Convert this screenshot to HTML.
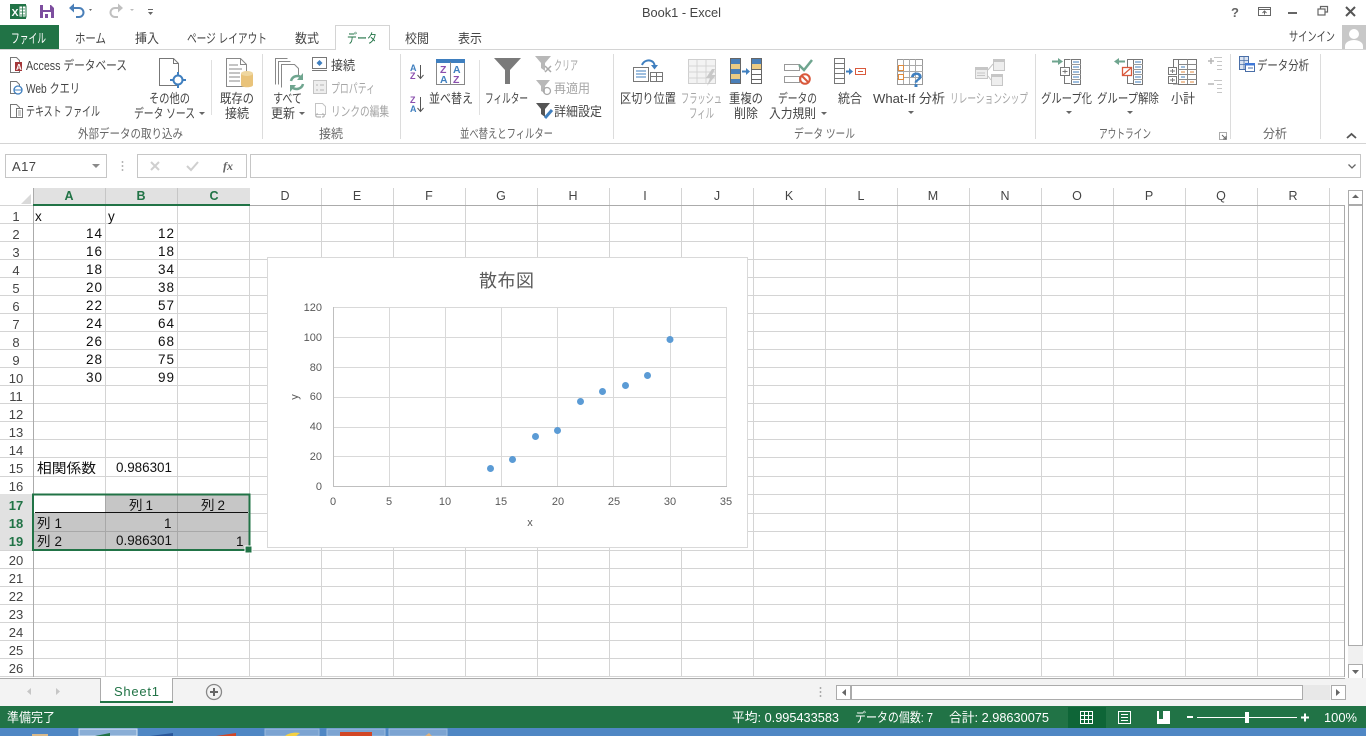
<!DOCTYPE html>
<html lang="ja"><head><meta charset="utf-8"><title>Book1 - Excel</title>
<style>
html,body{margin:0;padding:0;width:1366px;height:736px;overflow:hidden;background:#fff}
svg{display:block}
text{font-family:"Liberation Sans","Noto Sans CJK JP",sans-serif;font-size:13px;fill:#444}
.g{fill:#a6a6a6}
.s{font-size:12.500px;fill:#666}
.c{font-size:13.500px;fill:#111}
.h{font-size:12.500px;fill:#444;text-anchor:middle}
.hs{font-size:12.500px;fill:#217346;font-weight:bold;text-anchor:middle}
.r{font-size:13px;fill:#444;text-anchor:middle}
.rs{font-size:13px;fill:#217346;font-weight:bold;text-anchor:middle}
.a{font-size:11px;fill:#595959}
.w{fill:#fff}
</style></head><body>
<svg width="1366" height="736" viewBox="0 0 1366 736" xmlns="http://www.w3.org/2000/svg" shape-rendering="geometricPrecision">
<rect width="1366" height="736" fill="#fff"/>

<!-- QAT -->
<rect x="10" y="4" width="16" height="15" fill="#217346"/><rect x="19" y="6" width="7" height="11" fill="#fff" stroke="#217346"/><path d="M20 9h5M20 12h5M20 15h5M22.500 6v11" stroke="#217346" stroke-width=".8"/><text x="11.500" y="16" style="font-size:10.500px;font-weight:bold;fill:#fff">X</text>
<path d="M40 5h11l3 3v10H40z" fill="#7d4e9f"/><rect x="43" y="5" width="7" height="5" fill="#fff"/><rect x="43" y="12" width="8" height="6" fill="#fff"/><rect x="45" y="14" width="3" height="4" fill="#7d4e9f"/>
<path d="M70 8h9a4.500 4.500 0 0 1 0 9h-3" fill="none" stroke="#4a7fb8" stroke-width="2"/><path d="M74 3.500l-5 4.500 5 4.500z" fill="#4a7fb8"/><path d="M89 9l3 0-1.500 2z" fill="#666"/>
<path d="M121 8h-6a4.500 4.500 0 0 0 0 9h3" fill="none" stroke="#c0c0c0" stroke-width="2"/><path d="M118 3.500l5 4.500-5 4.500z" fill="#c0c0c0"/><path d="M130 9l4 0-2 2z" fill="#bbb"/>
<path d="M148 9h5v1h-5zM148 12l5 0-2.500 3z" fill="#666"/>
<text x="642" y="17" textLength="79" lengthAdjust="spacingAndGlyphs" style="font-size:13px">Book1 - Excel</text>

<!-- window controls -->
<text x="1231" y="17" style="font-size:13px;font-weight:bold;fill:#666">?</text>
<rect x="1258.500" y="7.500" width="12" height="8" fill="none" stroke="#666"/><path d="M1258 9.500h12" stroke="#666"/><path d="M1264.500 14.500v-3M1262.500 13l2-2 2 2" fill="none" stroke="#666"/>
<rect x="1288" y="12" width="9" height="2" fill="#666"/>
<rect x="1318" y="9" width="7" height="6" fill="#fff" stroke="#666" stroke-width="1.200"/><path d="M1320.500 9V6.500h7V12h-2" fill="none" stroke="#666" stroke-width="1.200"/>
<path d="M1346 7l9 9M1355 7l-9 9" stroke="#555" stroke-width="2"/>

<!-- Tabs -->
<rect x="0" y="25" width="59" height="25" fill="#217346"/>
<path d="M0 49.500H335.500V25.500H389.500V49.500H1366" fill="none" stroke="#d4d4d4"/>
<text x="11" y="43" class="w" textLength="35" lengthAdjust="spacingAndGlyphs">ファイル</text>
<text x="75" y="43" textLength="31" lengthAdjust="spacingAndGlyphs">ホーム</text>
<text x="135" y="43" textLength="24" lengthAdjust="spacingAndGlyphs">挿入</text>
<text x="187" y="43" textLength="80" lengthAdjust="spacingAndGlyphs">ページ レイアウト</text>
<text x="295" y="43" textLength="24" lengthAdjust="spacingAndGlyphs">数式</text>
<text x="347" y="43" textLength="30" lengthAdjust="spacingAndGlyphs" style="fill:#217346">データ</text>
<text x="405" y="43" textLength="24" lengthAdjust="spacingAndGlyphs">校閲</text>
<text x="458" y="43" textLength="24" lengthAdjust="spacingAndGlyphs">表示</text>
<text x="1289" y="41" textLength="46" lengthAdjust="spacingAndGlyphs">サインイン</text>
<rect x="1342" y="25" width="24" height="24" fill="#c8c8c8"/><circle cx="1354" cy="34" r="5" fill="#fff"/><path d="M1345 49v-3c0-4 5-6 9-6s9 2 9 6v3z" fill="#fff"/>

<!-- Ribbon frame -->
<path d="M0 143.500H1366" stroke="#d4d4d4"/>
<path d="M262.500 54v85M400.500 54v85M613.500 54v85M1035.500 54v85M1230.500 54v85M1320.500 54v85" stroke="#dcdcdc"/>
<path d="M211.500 60v55M479.500 60v55" stroke="#e0e0e0"/>

<!-- External data group -->
<path d="M10.500 57.500h6l3 3v12h-9z" fill="#fff" stroke="#777"/><rect x="15" y="62" width="7" height="9" fill="#a4373a"/><text x="16" y="70" style="font-size:8px;font-weight:bold;fill:#fff">A</text>
<text x="26" y="70" textLength="101" lengthAdjust="spacingAndGlyphs">Access データベース</text>
<path d="M10.500 81.500h6l3 3v9h-9z" fill="#fff" stroke="#777"/><circle cx="18" cy="90" r="4" fill="#fff" stroke="#3f7fbf" stroke-width="1.300"/><path d="M14 90h8" stroke="#3f7fbf"/>
<text x="26" y="93" textLength="54" lengthAdjust="spacingAndGlyphs">Web クエリ</text>
<path d="M10.500 104.500h6l3 3v10h-9z" fill="#fff" stroke="#777"/><rect x="16.500" y="108.500" width="6" height="9" fill="#fff" stroke="#777"/><path d="M18 111h3M18 113h3M18 115h3" stroke="#777" stroke-width=".7"/>
<text x="26" y="116" textLength="74" lengthAdjust="spacingAndGlyphs">テキスト ファイル</text>
<path d="M159.500 58.500h14l5 5v22h-19z" fill="#fff" stroke="#777"/><path d="M173.500 58.500v5h5" fill="none" stroke="#777"/>
<path d="M178 72v16M170 80h16" stroke="#3f7fbf" stroke-width="2"/><circle cx="178" cy="80" r="4.500" fill="#fff" stroke="#3f7fbf" stroke-width="2"/>
<text x="149" y="103" textLength="41" lengthAdjust="spacingAndGlyphs">その他の</text>
<text x="134" y="118" textLength="61" lengthAdjust="spacingAndGlyphs">データ ソース</text>
<path d="M199 112h6l-3 3z" fill="#666"/>
<path d="M226.500 58.500h14l6 6v22h-20z" fill="#fff" stroke="#888"/><path d="M240.500 58.500v6h6" fill="none" stroke="#888"/><path d="M229 65h9M229 69h13M229 73h11M229 77h11M229 81h11" stroke="#888"/>
<path d="M241 74v11c0 3 12 3 12 0V74z" fill="#e9c37a"/><ellipse cx="247" cy="73.500" rx="6" ry="2.500" fill="#efd7a0"/>
<text x="220" y="103" textLength="34" lengthAdjust="spacingAndGlyphs">既存の</text>
<text x="225" y="118" textLength="24" lengthAdjust="spacingAndGlyphs">接続</text>
<text x="78" y="138" class="s" textLength="105" lengthAdjust="spacingAndGlyphs">外部データの取り込み</text>

<!-- connections -->
<path d="M275.500 84.500v-26h12" fill="none" stroke="#888"/><path d="M278.500 84.500v-23h12" fill="none" stroke="#888"/><path d="M281.500 87.500v-23h13l4 4v8" fill="#fff" stroke="#888"/>
<path d="M291 81a6.500 6.500 0 0 1 11-3" fill="none" stroke="#6fa58f" stroke-width="2.500"/><path d="M303 73v7h-6z" fill="#6fa58f"/><path d="M303 84a6.500 6.500 0 0 1-11 3" fill="none" stroke="#6fa58f" stroke-width="2.500"/><path d="M290 92v-7h6z" fill="#6fa58f"/>
<text x="273" y="103" textLength="29" lengthAdjust="spacingAndGlyphs">すべて</text>
<text x="271" y="118" textLength="24" lengthAdjust="spacingAndGlyphs">更新</text>
<path d="M299 112h6l-3 3z" fill="#666"/>
<rect x="312.500" y="57.500" width="14" height="11" fill="#fff" stroke="#777"/><path d="M312 70.500h15" stroke="#777"/><path d="M319.500 60l3 3-3 3-3-3z" fill="#3f7fbf"/>
<text x="331" y="70" textLength="24" lengthAdjust="spacingAndGlyphs">接続</text>
<rect x="313.500" y="80.500" width="13" height="13" fill="#eee" stroke="#c4c4c4"/><path d="M316 85h2M320 85h4M316 90h2M320 90h4" stroke="#b5b5b5"/>
<text x="331" y="93" class="g" textLength="44" lengthAdjust="spacingAndGlyphs">プロパティ</text>
<path d="M315.500 103.500h7l3 3v8h-10z" fill="#fff" stroke="#c4c4c4"/><path d="M318 114c-3 0-3 3 0 3h3M322 114c3 0 3 3 0 3" fill="none" stroke="#b5b5b5" stroke-width="1.200"/>
<text x="331" y="116" class="g" textLength="58" lengthAdjust="spacingAndGlyphs">リンクの編集</text>
<text x="319" y="138" class="s" textLength="24" lengthAdjust="spacingAndGlyphs">接続</text>

<!-- Sort -->
<text x="410" y="71" style="font-size:9px;font-weight:bold;fill:#3f7fbf">A</text><text x="410" y="79" style="font-size:9px;font-weight:bold;fill:#8a4fae">Z</text>
<path d="M420.500 65v13M417.500 75l3 3.500 3-3.500" fill="none" stroke="#555"/>
<text x="410" y="103" style="font-size:9px;font-weight:bold;fill:#8a4fae">Z</text><text x="410" y="112" style="font-size:9px;font-weight:bold;fill:#3f7fbf">A</text>
<path d="M420.500 97v14M417.500 108l3 3.500 3-3.500" fill="none" stroke="#555"/>
<rect x="436.500" y="62.500" width="28" height="22" fill="#fff" stroke="#888"/><rect x="436" y="59" width="29" height="4" fill="#3f7fbf"/><path d="M450.500 62v22" stroke="#888"/>
<text x="440" y="73" style="font-size:10.500px;font-weight:bold;fill:#8a4fae">Z</text><text x="440" y="83" style="font-size:10.500px;font-weight:bold;fill:#3f7fbf">A</text>
<text x="453" y="73" style="font-size:10.500px;font-weight:bold;fill:#3f7fbf">A</text><text x="453" y="83" style="font-size:10.500px;font-weight:bold;fill:#8a4fae">Z</text>
<text x="429" y="103" textLength="44" lengthAdjust="spacingAndGlyphs">並べ替え</text>
<path d="M494 58h27l-11 12v14h-5V70z" fill="#7a7a7a"/>
<text x="485" y="103" textLength="43" lengthAdjust="spacingAndGlyphs">フィルター</text>
<path d="M535 56h16l-6 7v8l-4-3v-5z" fill="#b8b8b8"/><path d="M545 66l6 6M551 66l-6 6" stroke="#aaa" stroke-width="1.500"/>
<text x="554" y="70" class="g" textLength="24" lengthAdjust="spacingAndGlyphs">クリア</text>
<path d="M536 80h14l-5 6v7l-4-2v-5z" fill="#b8b8b8"/><circle cx="547" cy="91" r="3.500" fill="none" stroke="#aaa" stroke-width="1.300"/>
<text x="554" y="93" class="g" textLength="36" lengthAdjust="spacingAndGlyphs">再適用</text>
<path d="M536 103h14l-5 6v8l-4-3v-5z" fill="#555"/><path d="M545 118l7-8" stroke="#3f7fbf" stroke-width="3"/>
<text x="554" y="116" textLength="48" lengthAdjust="spacingAndGlyphs">詳細設定</text>
<text x="460" y="138" class="s" textLength="93" lengthAdjust="spacingAndGlyphs">並べ替えとフィルター</text>

<!-- Data tools -->
<rect x="633.500" y="67.500" width="15" height="14" fill="#fff" stroke="#777"/><path d="M636 71h10M636 74h10M636 77h10" stroke="#3f7fbf"/>
<rect x="650.500" y="72.500" width="12" height="9" fill="#fff" stroke="#777"/><path d="M651 76.500h11M656.500 72v9" stroke="#777"/>
<path d="M642 65a7 7 0 0 1 11-3 6 6 0 0 1 1.500 5" fill="none" stroke="#3f7fbf" stroke-width="2"/><path d="M651 65h7l-3.500 4.500z" fill="#3f7fbf"/>
<text x="620" y="103" textLength="56" lengthAdjust="spacingAndGlyphs">区切り位置</text>
<rect x="688.500" y="59.500" width="27" height="24" fill="#f3f3f3" stroke="#cfcfcf"/><path d="M688 66h27M688 72h27M688 78h27M697 60v24M706 60v24" stroke="#d4d4d4"/><path d="M712 69l-6 9h4l-3 8 9-11h-4l3-6z" fill="#c8c8c8"/>
<text x="681" y="103" class="g" textLength="41" lengthAdjust="spacingAndGlyphs">フラッシュ</text>
<text x="689" y="118" class="g" textLength="25" lengthAdjust="spacingAndGlyphs">フィル</text>
<rect x="730.500" y="58.500" width="10" height="25" fill="#4a7fb8" stroke="#666"/><rect x="731" y="64" width="9" height="5" fill="#eccb84"/><rect x="731" y="74" width="9" height="5" fill="#eccb84"/>
<path d="M742 71.500h5" stroke="#3f7fbf" stroke-width="2"/><path d="M746 68l4 3.500-4 3.500z" fill="#3f7fbf"/>
<rect x="751.500" y="58.500" width="10" height="25" fill="#fff" stroke="#666"/><rect x="752" y="59" width="9" height="5" fill="#4a7fb8"/><rect x="752" y="64" width="9" height="5" fill="#eccb84"/><path d="M751 69.500h11M751 74.500h11M751 79.500h11" stroke="#666"/>
<text x="729" y="103" textLength="34" lengthAdjust="spacingAndGlyphs">重複の</text>
<text x="734" y="118" textLength="24" lengthAdjust="spacingAndGlyphs">削除</text>
<rect x="784.500" y="64.500" width="15" height="6" fill="#fff" stroke="#999"/><rect x="784.500" y="76.500" width="15" height="6" fill="#fff" stroke="#999"/>
<path d="M799 65l5 5 8-10" fill="none" stroke="#6fa58f" stroke-width="2.500"/>
<circle cx="805" cy="79" r="4.800" fill="#fff" stroke="#d9593c" stroke-width="2"/><path d="M802 76l6 6" stroke="#d9593c" stroke-width="2"/>
<text x="778" y="103" textLength="39" lengthAdjust="spacingAndGlyphs">データの</text>
<text x="769" y="118" textLength="47" lengthAdjust="spacingAndGlyphs">入力規則</text>
<path d="M821 112h6l-3 3z" fill="#666"/>
<rect x="834.500" y="58.500" width="10" height="25" fill="#fff" stroke="#777"/><path d="M834 63.500h11M834 68.500h11M834 73.500h11M834 78.500h11" stroke="#777"/>
<path d="M846 71.500h4" stroke="#3f7fbf" stroke-width="2"/><path d="M849 68l4 3.500-4 3.500z" fill="#3f7fbf"/>
<rect x="855.500" y="68.500" width="10" height="6" fill="#fff" stroke="#d9593c"/><path d="M858 71.500h5" stroke="#d9593c"/>
<text x="838" y="103" textLength="24" lengthAdjust="spacingAndGlyphs">統合</text>
<rect x="897.500" y="59.500" width="25" height="25" fill="#fff" stroke="#999"/><path d="M897 65.500h26M897 71.500h26M897 77.500h26M903.500 59v25M909.500 59v25M915.500 59v25" stroke="#aaa"/><rect x="898.500" y="65.500" width="5" height="5" fill="#fff" stroke="#e08a3c"/><rect x="898.500" y="74.500" width="5" height="5" fill="#fff" stroke="#e08a3c"/>
<text x="910" y="87" style="font-size:21px;font-weight:bold;fill:#3f7fbf">?</text>
<text x="873" y="103" textLength="72" lengthAdjust="spacingAndGlyphs">What-If 分析</text>
<path d="M908 111h6l-3 3z" fill="#666"/>
<rect x="975.500" y="67.500" width="12" height="11" fill="#eee" stroke="#c6c6c6"/><rect x="975" y="67" width="13" height="3" fill="#c6c6c6"/><path d="M977 73h8M977 75.500h8" stroke="#c6c6c6"/>
<rect x="993.500" y="59.500" width="11" height="11" fill="#eee" stroke="#c6c6c6"/><rect x="993" y="59" width="12" height="3" fill="#c6c6c6"/>
<rect x="991.500" y="74.500" width="11" height="11" fill="#eee" stroke="#c6c6c6"/><rect x="991" y="74" width="12" height="3" fill="#c6c6c6"/>
<path d="M988 70l5-6M988 76l3 4" stroke="#c6c6c6"/>
<text x="950" y="103" class="g" textLength="78" lengthAdjust="spacingAndGlyphs">リレーションシップ</text>
<text x="794" y="138" class="s" textLength="61" lengthAdjust="spacingAndGlyphs">データ ツール</text>

<!-- Outline -->
<path d="M1052 61.500h9" stroke="#6fa58f" stroke-width="2"/><path d="M1058 58l5 3.500-5 3.500z" fill="#6fa58f"/>
<path d="M1070.500 59.500h-6v8M1064.500 76v7.500h6" fill="none" stroke="#777"/><rect x="1060.500" y="67.500" width="9" height="8" fill="#fff" stroke="#777"/><path d="M1062.500 71.500h5M1065 69.500v4" stroke="#777"/>
<rect x="1071.500" y="59.500" width="9" height="25" fill="#fff" stroke="#777"/><path d="M1071 64.500h10M1071 69.500h10M1071 74.500h10M1071 79.500h10" stroke="#999"/><path d="M1073 62h6M1073 67h6M1073 72h6M1073 77h6M1073 82h6" stroke="#3f7fbf"/>
<text x="1041" y="103" textLength="51" lengthAdjust="spacingAndGlyphs">グループ化</text>
<path d="M1066 111h6l-3 3z" fill="#666"/>
<path d="M1125 61.500h-8" stroke="#6fa58f" stroke-width="2"/><path d="M1119 58l-5 3.500 5 3.500z" fill="#6fa58f"/>
<path d="M1133.500 59.500h-6v8M1127.500 76v7.500h6" fill="none" stroke="#777"/><rect x="1122.500" y="67.500" width="9" height="8" fill="#fff" stroke="#d9593c" stroke-width="1.300"/><path d="M1123 75l8-7" stroke="#d9593c" stroke-width="1.300"/>
<rect x="1133.500" y="59.500" width="9" height="25" fill="#fff" stroke="#777"/><path d="M1133 64.500h10M1133 69.500h10M1133 74.500h10M1133 79.500h10" stroke="#999"/><path d="M1135 62h6M1135 67h6M1135 72h6M1135 77h6M1135 82h6" stroke="#3f7fbf"/>
<text x="1097" y="103" textLength="62" lengthAdjust="spacingAndGlyphs">グループ解除</text>
<path d="M1127 111h6l-3 3z" fill="#666"/>
<path d="M1179.500 59.500h-6v8M1173.500 76v8h6" fill="none" stroke="#777"/>
<rect x="1168.500" y="67.500" width="8" height="7" fill="#fff" stroke="#777"/><rect x="1168.500" y="76.500" width="8" height="7" fill="#fff" stroke="#777"/><path d="M1170 71h5M1172.500 69v4M1170 80h5M1172.500 78v4" stroke="#777"/>
<rect x="1178.500" y="59.500" width="18" height="25" fill="#fff" stroke="#777"/><path d="M1178 64.500h19M1178 69.500h19M1178 74.500h19M1178 79.500h19M1187.500 59v25" stroke="#888"/><path d="M1181 67h4M1181 77h4" stroke="#3f7fbf"/><path d="M1181 72h4M1190 72h4M1181 82h4M1190 82h4" stroke="#e08a3c"/>
<text x="1171" y="103" textLength="24" lengthAdjust="spacingAndGlyphs">小計</text>
<path d="M1208 61h6M1211 58v6" stroke="#b5b5b5" stroke-width="1.500"/><path d="M1214 57.500h8M1217 61.500h5M1217 65.500h5M1217 69.500h5" stroke="#c6c6c6"/>
<path d="M1208 84h6" stroke="#b5b5b5" stroke-width="1.500"/><path d="M1214 80.500h8M1217 84.500h5M1217 88.500h5M1217 92.500h5" stroke="#c6c6c6"/>
<text x="1099" y="138" class="s" textLength="52" lengthAdjust="spacingAndGlyphs">アウトライン</text>
<path d="M1219.500 132.500h7v7h-7z" fill="none" stroke="#aaa"/><path d="M1222 135l4 4M1226 136v3h-3" fill="none" stroke="#666"/>

<!-- Analysis -->
<rect x="1239.500" y="56.500" width="9" height="13" fill="#dbe4f2" stroke="#4a6fa8"/><path d="M1239 60.500h10M1239 64.500h10M1244 57v12" stroke="#4a6fa8" stroke-width=".8"/>
<rect x="1245.500" y="63.500" width="9" height="8" fill="#fff" stroke="#4a6fa8"/><rect x="1245" y="63" width="10" height="2.500" fill="#3f78d8"/><path d="M1248 68h5" stroke="#4a6fa8"/>
<text x="1257" y="70" textLength="52" lengthAdjust="spacingAndGlyphs">データ分析</text>
<text x="1263" y="138" class="s" textLength="24" lengthAdjust="spacingAndGlyphs">分析</text>
<path d="M1347 138l4.500-4 4.500 4" fill="none" stroke="#555" stroke-width="1.800"/>

<!-- Formula bar -->
<rect x="5.500" y="154.500" width="101" height="23" fill="#fff" stroke="#c6c6c6"/>
<text x="12" y="171" textLength="24" lengthAdjust="spacing" style="font-size:13px">A17</text>
<path d="M92 164h8l-4 4z" fill="#8a8a8a"/>
<path d="M122.500 161v2M122.500 165v2M122.500 169v2" stroke="#b5b5b5" stroke-width="1.500"/>
<rect x="137.500" y="154.500" width="109" height="23" fill="#fff" stroke="#c6c6c6"/>
<path d="M151 162l8 8M159 162l-8 8" stroke="#cfcfcf" stroke-width="2"/>
<path d="M187 166l4 4 7-8" fill="none" stroke="#cfcfcf" stroke-width="2"/>
<text x="223" y="170" style="font-family:'Liberation Serif',serif;font-style:italic;font-weight:bold;font-size:12px;fill:#666">fx</text>
<rect x="250.500" y="154.500" width="1110" height="23" fill="#fff" stroke="#c6c6c6"/>
<path d="M1348.500 164.500l3.500 3.500 3.500-3.500" fill="none" stroke="#666" stroke-width="1.300"/>

<!-- Grid -->
<path d="M105.500 188v489M177.500 188v489M249.500 188v489M321.500 188v489M393.500 188v489M465.500 188v489M537.500 188v489M609.500 188v489M681.500 188v489M753.500 188v489M825.500 188v489M897.500 188v489M969.500 188v489M1041.500 188v489M1113.500 188v489M1185.500 188v489M1257.500 188v489M1329.500 188v489" stroke="#d4d4d4"/>
<path d="M0 223.500H1344M0 241.500H1344M0 259.500H1344M0 277.500H1344M0 295.500H1344M0 313.500H1344M0 331.500H1344M0 349.500H1344M0 367.500H1344M0 385.500H1344M0 403.500H1344M0 421.500H1344M0 439.500H1344M0 457.500H1344M0 476.500H1344M0 494.500H1344M0 513.500H1344M0 531.500H1344M0 550.500H1344M0 568.500H1344M0 586.500H1344M0 604.500H1344M0 622.500H1344M0 640.500H1344M0 658.500H1344M0 676.500H1344" stroke="#d4d4d4"/>

<!-- Headers -->
<rect x="33" y="188" width="217" height="17" fill="#e1e1e1"/>
<rect x="0" y="494" width="33" height="56" fill="#e1e1e1"/>
<path d="M105.500 188v17M177.500 188v17" stroke="#c6c6c6"/>
<path d="M33.500 188V677" stroke="#ababab"/>
<path d="M250 205.500H1344.500V677" fill="none" stroke="#ababab"/>
<path d="M0 205.500H33" stroke="#d4d4d4"/>
<rect x="33" y="204" width="217" height="2" fill="#217346"/>
<path d="M21 204h10v-10z" fill="#d9d9d9"/>
<text x="69" y="200" class="hs">A</text><text x="141" y="200" class="hs">B</text><text x="214" y="200" class="hs">C</text>
<text x="285" y="200" class="h">D</text><text x="357" y="200" class="h">E</text><text x="429" y="200" class="h">F</text><text x="501" y="200" class="h">G</text><text x="573" y="200" class="h">H</text><text x="645" y="200" class="h">I</text><text x="717" y="200" class="h">J</text><text x="789" y="200" class="h">K</text><text x="861" y="200" class="h">L</text><text x="933" y="200" class="h">M</text><text x="1005" y="200" class="h">N</text><text x="1077" y="200" class="h">O</text><text x="1149" y="200" class="h">P</text><text x="1221" y="200" class="h">Q</text><text x="1293" y="200" class="h">R</text>
<text x="16" y="221" class="r">1</text><text x="16" y="239" class="r">2</text><text x="16" y="257" class="r">3</text><text x="16" y="275" class="r">4</text><text x="16" y="293" class="r">5</text><text x="16" y="311" class="r">6</text><text x="16" y="329" class="r">7</text><text x="16" y="347" class="r">8</text><text x="16" y="365" class="r">9</text><text x="16" y="383" class="r">10</text><text x="16" y="401" class="r">11</text><text x="16" y="419" class="r">12</text><text x="16" y="437" class="r">13</text><text x="16" y="455" class="r">14</text><text x="16" y="473" class="r">15</text><text x="16" y="491" class="r">16</text>
<text x="16" y="510" class="rs">17</text><text x="16" y="528" class="rs">18</text><text x="16" y="546" class="rs">19</text>
<text x="16" y="565" class="r">20</text><text x="16" y="583" class="r">21</text><text x="16" y="601" class="r">22</text><text x="16" y="619" class="r">23</text><text x="16" y="637" class="r">24</text><text x="16" y="655" class="r">25</text><text x="16" y="673" class="r">26</text>

<!-- Cells -->
<g class="cells">
<text x="35" y="221" class="c">x</text><text x="108" y="221" class="c">y</text>
<g text-anchor="end" style="letter-spacing:1px">
<text x="103" y="238" class="c">14</text><text x="175" y="238" class="c">12</text>
<text x="103" y="256" class="c">16</text><text x="175" y="256" class="c">18</text>
<text x="103" y="274" class="c">18</text><text x="175" y="274" class="c">34</text>
<text x="103" y="292" class="c">20</text><text x="175" y="292" class="c">38</text>
<text x="103" y="310" class="c">22</text><text x="175" y="310" class="c">57</text>
<text x="103" y="328" class="c">24</text><text x="175" y="328" class="c">64</text>
<text x="103" y="346" class="c">26</text><text x="175" y="346" class="c">68</text>
<text x="103" y="364" class="c">28</text><text x="175" y="364" class="c">75</text>
<text x="103" y="382" class="c">30</text><text x="175" y="382" class="c">99</text>
</g>
<text x="37" y="473" class="c" textLength="59" lengthAdjust="spacingAndGlyphs">相関係数</text>
<text x="116" y="472" class="c" textLength="56" lengthAdjust="spacingAndGlyphs">0.986301</text>
</g>

<!-- Selection table -->
<rect x="105" y="495" width="144" height="17" fill="#c6c6c6"/>
<rect x="34" y="513" width="215" height="36" fill="#c6c6c6"/>
<path d="M105.500 495v54M177.500 495v54" stroke="#a8a8a8"/><path d="M34 531.500h215" stroke="#a8a8a8"/>
<path d="M35 512.500H248" stroke="#111"/>
<text x="129" y="510" class="c" textLength="24" lengthAdjust="spacing">列 1</text>
<text x="201" y="510" class="c" textLength="24" lengthAdjust="spacing">列 2</text>
<text x="37" y="528" class="c" textLength="25" lengthAdjust="spacing">列 1</text>
<text x="37" y="546" class="c" textLength="25" lengthAdjust="spacing">列 2</text>
<text x="164" y="528" class="c">1</text>
<text x="116" y="545" class="c" textLength="56" lengthAdjust="spacingAndGlyphs">0.986301</text>
<text x="236" y="546" class="c">1</text>
<rect x="33" y="494.500" width="216.500" height="55.500" fill="none" stroke="#217346" stroke-width="2"/>
<rect x="245" y="546" width="7" height="7" fill="#217346" stroke="#fff"/>

<!-- Chart -->
<rect x="267.500" y="257.500" width="480" height="290" fill="#fff" stroke="#d9d9d9"/>
<text x="479" y="287" textLength="55" lengthAdjust="spacing" style="font-size:18px;fill:#595959">散布図</text>
<path d="M333.500 307.500H726.500M333.500 337.500H726.500M333.500 367.500H726.500M333.500 397.500H726.500M333.500 427.500H726.500M333.500 456.500H726.500M389.500 307v179M445.500 307v179M501.500 307v179M557.500 307v179M613.500 307v179M670.500 307v179M726.500 307v179" stroke="#d9d9d9"/>
<path d="M333.500 307v179.500H727" fill="none" stroke="#bfbfbf"/>
<g text-anchor="end"><text x="322" y="311" class="a">120</text><text x="322" y="341" class="a">100</text><text x="322" y="371" class="a">80</text><text x="322" y="400" class="a">60</text><text x="322" y="430" class="a">40</text><text x="322" y="460" class="a">20</text><text x="322" y="490" class="a">0</text></g>
<g text-anchor="middle"><text x="333" y="505" class="a">0</text><text x="389" y="505" class="a">5</text><text x="445" y="505" class="a">10</text><text x="501" y="505" class="a">15</text><text x="558" y="505" class="a">20</text><text x="614" y="505" class="a">25</text><text x="670" y="505" class="a">30</text><text x="726" y="505" class="a">35</text><text x="530" y="526" class="a">x</text></g>
<text transform="translate(298,397) rotate(-90)" class="a" text-anchor="middle">y</text>
<g fill="#5b9bd5"><circle cx="490.500" cy="468.500" r="3.500"/><circle cx="512.500" cy="459.500" r="3.500"/><circle cx="535.500" cy="436.500" r="3.500"/><circle cx="557.500" cy="430.500" r="3.500"/><circle cx="580.500" cy="401.500" r="3.500"/><circle cx="602.500" cy="391.500" r="3.500"/><circle cx="625.500" cy="385.500" r="3.500"/><circle cx="647.500" cy="375.500" r="3.500"/><circle cx="670" cy="339.500" r="3.500"/></g>

<!-- Vertical scrollbar -->
<rect x="1345" y="188" width="21" height="490" fill="#fff"/>
<path d="M1344.500 205V677" stroke="#ababab"/>
<rect x="1348" y="190" width="15" height="488" fill="#f0f0f0"/>
<rect x="1348.500" y="190.500" width="14" height="14" fill="#fff" stroke="#ababab"/><path d="M1352 198h7l-3.500-3.500z" fill="#666"/>
<rect x="1348.500" y="205.500" width="14" height="440" fill="#fff" stroke="#ababab"/>
<rect x="1348.500" y="664.500" width="14" height="14" fill="#fff" stroke="#ababab"/><path d="M1352 670h7l-3.500 4z" fill="#666"/>

<!-- Sheet bar -->
<rect x="0" y="678" width="1366" height="28" fill="#f3f3f3"/>
<path d="M0 678.500H100.500M172.500 678.500H1345" stroke="#ababab"/>
<path d="M100.500 678v25M172.500 678v25" stroke="#ababab"/>
<rect x="101" y="678" width="71" height="25" fill="#fff"/>
<rect x="100" y="701" width="73" height="2" fill="#217346"/>
<text x="114" y="696" textLength="45" lengthAdjust="spacing" style="font-size:13px;fill:#217346">Sheet1</text>
<path d="M31 688l-4 3.500 4 3.500zM56 688l4 3.500-4 3.500z" fill="#c6c6c6"/>
<circle cx="214" cy="692" r="7.500" fill="none" stroke="#888" stroke-width="1.300"/><path d="M210 692h8M214 688v8" stroke="#666" stroke-width="2"/>
<path d="M820.500 687v2M820.500 691v2M820.500 695v2" stroke="#aaa" stroke-width="1.500"/>
<rect x="837" y="685" width="493" height="15" fill="#e8e8e8"/>
<rect x="836.500" y="685.500" width="14" height="14" fill="#fff" stroke="#ababab"/><path d="M846 689l-4 3.500 4 3.500z" fill="#666"/>
<rect x="851.500" y="685.500" width="451" height="14" fill="#fff" stroke="#ababab"/>
<rect x="1331.500" y="685.500" width="14" height="14" fill="#fff" stroke="#ababab"/><path d="M1336 689l4 3.500-4 3.500z" fill="#666"/>

<!-- Status bar -->
<rect x="0" y="706" width="1366" height="22" fill="#217346"/>
<text x="7" y="722" class="w" textLength="48" lengthAdjust="spacingAndGlyphs">準備完了</text>
<text x="732" y="722" class="w" textLength="107" lengthAdjust="spacingAndGlyphs">平均: 0.995433583</text>
<text x="855" y="722" class="w" textLength="78" lengthAdjust="spacingAndGlyphs">データの個数: 7</text>
<text x="949" y="722" class="w" textLength="100" lengthAdjust="spacingAndGlyphs">合計: 2.98630075</text>
<rect x="1068" y="707" width="38" height="21" fill="#0e6537"/>
<rect x="1080.500" y="711.500" width="12" height="12" fill="none" stroke="#fff"/><path d="M1084.500 711v13M1088.500 711v13M1080 715.500h13M1080 719.500h13" stroke="#fff"/>
<rect x="1118.500" y="711.500" width="12" height="12" fill="none" stroke="#fff"/><path d="M1121 714.500h7M1121 717.500h7M1121 720.500h7" stroke="#fff"/>
<rect x="1157" y="711" width="13" height="13" fill="#fff"/><rect x="1159" y="711" width="4" height="8" fill="#217346"/><rect x="1164" y="711" width="4" height="8" fill="#fff"/>
<rect x="1187" y="716" width="6" height="2" fill="#fff"/>
<path d="M1197 717.500H1297" stroke="#fff"/><rect x="1245" y="712" width="4" height="11" fill="#fff"/>
<path d="M1301 717.500h8M1305 713.500v8" stroke="#fff" stroke-width="2"/>
<text x="1324" y="722" class="w" textLength="33" lengthAdjust="spacingAndGlyphs">100%</text>

<!-- Taskbar -->
<rect x="0" y="728" width="1366" height="8" fill="#4f87c4"/>
<rect x="79" y="729" width="58" height="7" fill="#8aaed6" stroke="#d6e4f2"/><path d="M95 736l15-3v3z" fill="#217346"/>
<path d="M150 736l23-3v3z" fill="#2a579a"/><path d="M216 736l20-3v3z" fill="#d24726"/>
<rect x="265" y="729" width="54" height="7" fill="#7ca4d2" stroke="#9dbbdd"/><path d="M285 736c3-3 10-4 15-3l-4 3z" fill="#f5d142"/>
<rect x="327" y="729" width="58" height="7" fill="#7ca4d2" stroke="#9dbbdd"/><rect x="340" y="732" width="32" height="4" fill="#d24726"/>
<rect x="389" y="729" width="58" height="7" fill="#7ca4d2" stroke="#9dbbdd"/><path d="M425 736l4-3 3 3z" fill="#e0b27a"/>
<rect x="32" y="734" width="16" height="2" fill="#d9b98a"/>
</svg>
</body></html>
